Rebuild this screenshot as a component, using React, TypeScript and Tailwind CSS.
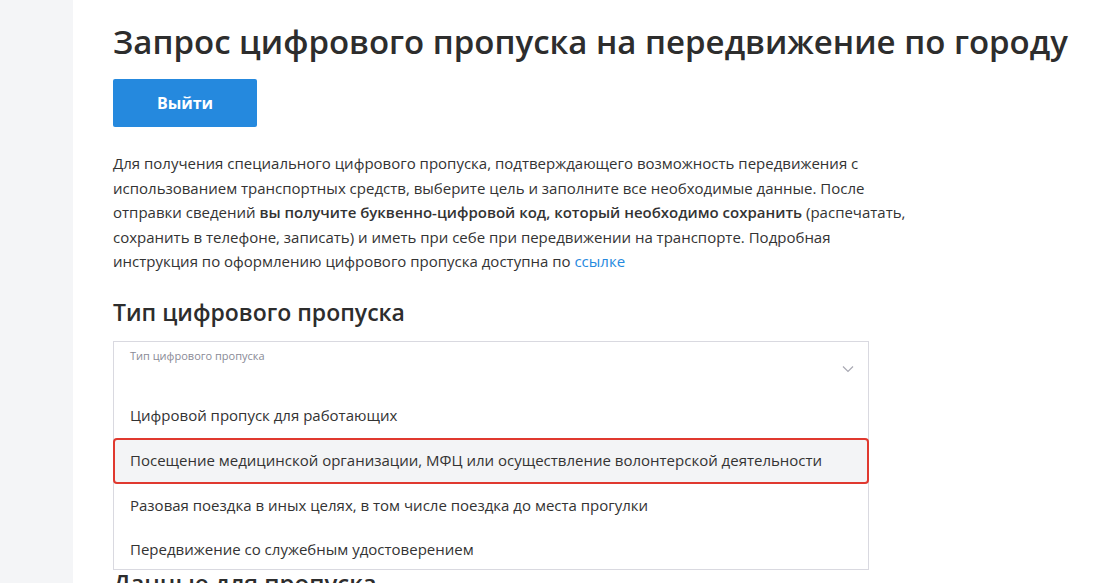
import React from "react";

const options = [
  "Цифровой пропуск для работающих",
  "Посещение медицинской организации, МФЦ или осуществление волонтерской деятельности",
  "Разовая поездка в иных целях, в том числе поездка до места прогулки",
  "Передвижение со служебным удостоверением",
];

export default function App() {
  return (
    <div
      className="flex h-[583px] w-[1108px] overflow-hidden bg-white text-[#333333]"
      style={{ fontFamily: '"Open Sans", "Noto Sans", sans-serif' }}
    >
      <aside className="w-[73px] shrink-0 bg-[#f4f5f7]" />
      <main className="flex flex-col pl-[40px] pt-[18px]">
        <h1 className="whitespace-nowrap text-[33px] font-semibold leading-[48px] text-[#2d2d2d]">
          Запрос цифрового пропуска на передвижение по городу
        </h1>
        <div className="mt-[13px]">
          <button className="h-[48px] w-[144px] rounded-[2px] bg-[#2589de] text-[16px] font-bold text-white">
            Выйти
          </button>
        </div>
        <p className="mt-[24px] w-[820px] whitespace-nowrap text-[15px] leading-[24.5px] text-[#333333]">
          Для получения специального цифрового пропуска, подтверждающего возможность передвижения с
          <br />
          использованием транспортных средств, выберите цель и заполните все необходимые данные. После
          <br />
          отправки сведений <b className="font-semibold">вы получите буквенно-цифровой код, который необходимо сохранить</b> (распечатать,
          <br />
          сохранить в телефоне, записать) и иметь при себе при передвижении на транспорте. Подробная
          <br />
          инструкция по оформлению цифрового пропуска доступна по{" "}
          <a className="text-[#2589de]">ссылке</a>
        </p>
        <h2 className="mt-[22px] text-[23px] font-semibold leading-[32px] text-[#2d2d2d]">
          Тип цифрового пропуска
        </h2>
        <div className="relative mt-[13px] w-[756px]">
          <div className="h-[60px] rounded-[2px] border border-[#d9d9e0]" />
          <h2 className="mt-[166px] text-[24px] font-semibold leading-[32px] text-[#2d2d2d]">
            Данные для пропуска
          </h2>
          <div className="absolute left-0 top-0 z-10 flex h-[229px] w-[756px] flex-col border border-[#d9d9e0] bg-white">
            <div className="relative h-[52px] shrink-0 px-[16px] pt-0">
              <span className="text-[11px] leading-[22px] text-[#8a8a96]">Тип цифрового пропуска</span>
              <svg
                className="absolute right-[14px] top-[23px]"
                width="12"
                height="8"
                viewBox="0 0 12 8"
                fill="none"
              >
                <path d="M1 1.5L6 6.5L11 1.5" stroke="#a9a9b3" strokeWidth="1.2" />
              </svg>
            </div>
            {options.map((o, i) => (
              <div
                key={o}
                className={
                  i === 1
                    ? "-mx-px flex h-[46px] shrink-0 items-center rounded-[4px] border-2 border-[#e0392f] bg-[#f3f4f6] px-[15px] text-[15px] text-[#333333]"
                    : "flex h-[44px] shrink-0 items-center px-[16px] text-[15px] text-[#333333]"
                }
              >
                {o}
              </div>
            ))}
          </div>
        </div>
      </main>
    </div>
  );
}
